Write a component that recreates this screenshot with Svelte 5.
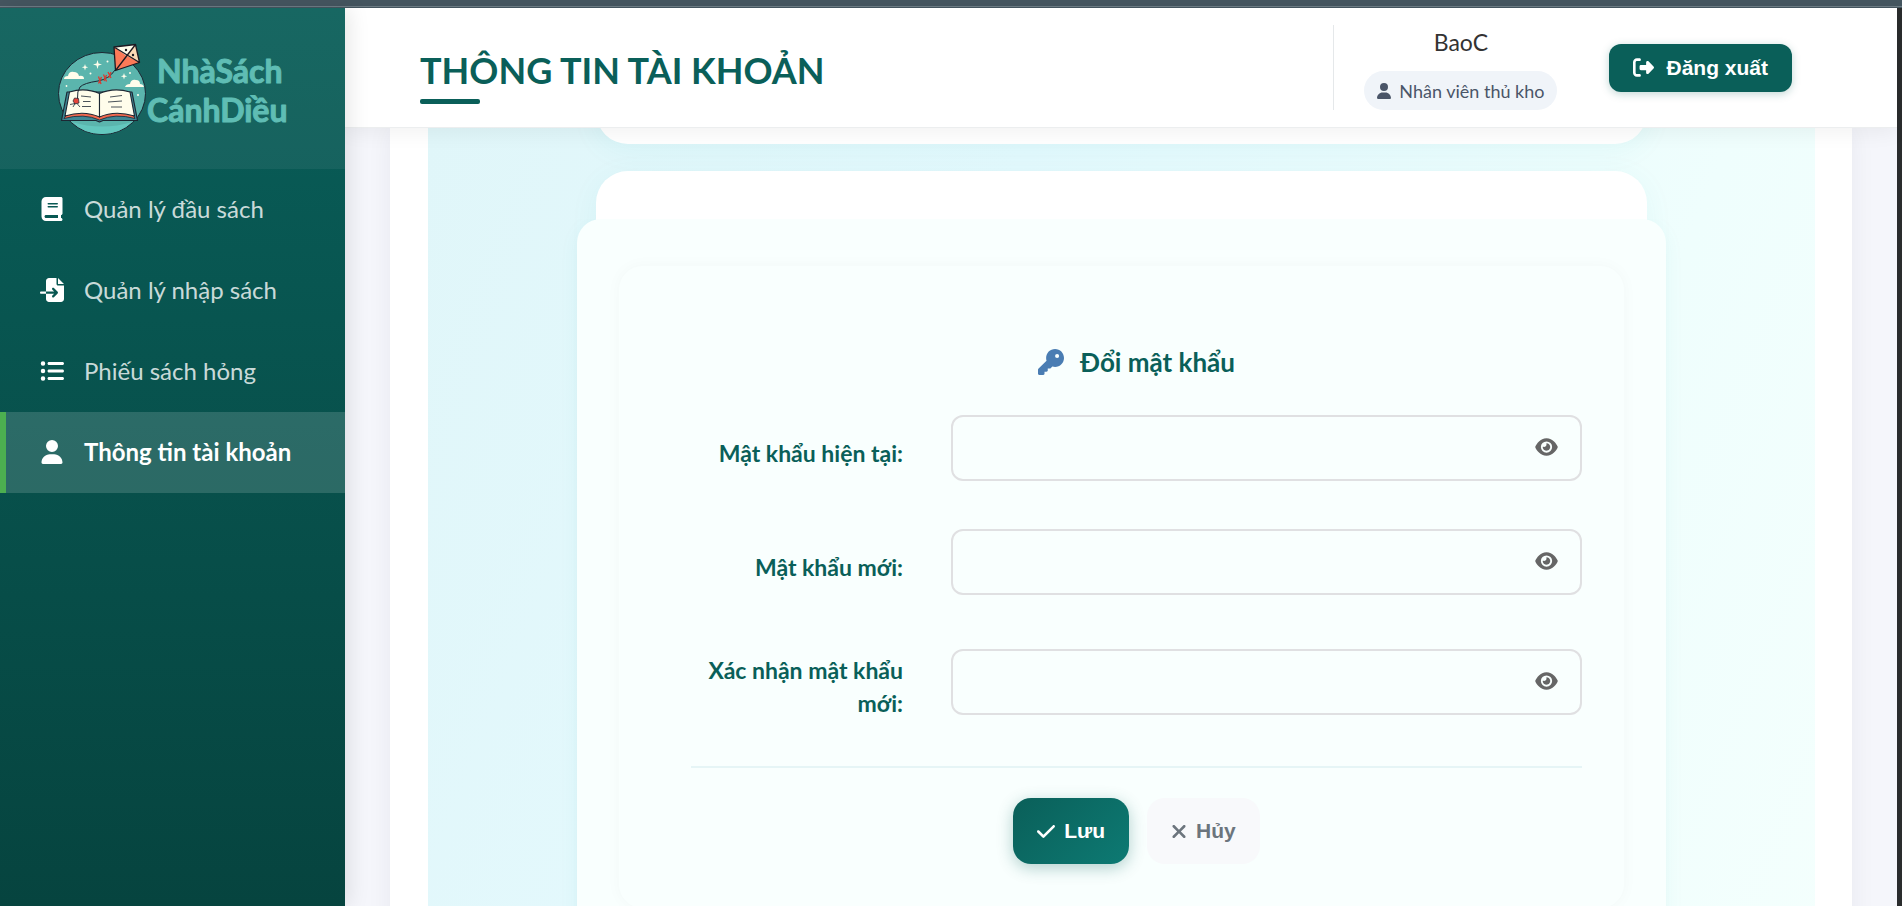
<script>
  const icons = {
    book: { box: '0 0 448 512', d: 'M96 0C43 0 0 43 0 96V416c0 53 43 96 96 96H384h32c17.7 0 32-14.3 32-32s-14.3-32-32-32V384c17.7 0 32-14.3 32-32V32c0-17.7-14.3-32-32-32H384 96zm0 384H352v64H96c-17.7 0-32-14.3-32-32s14.3-32 32-32zm32-240c0-8.8 7.2-16 16-16H336c8.8 0 16 7.2 16 16s-7.2 16-16 16H144c-8.8 0-16-7.2-16-16zm16 48H336c8.8 0 16 7.2 16 16s-7.2 16-16 16H144c-8.8 0-16-7.2-16-16s7.2-16 16-16z' },
    fileImport: { box: '0 0 512 512', d: 'M128 64c0-35.3 28.7-64 64-64H352V128c0 17.7 14.3 32 32 32H512V448c0 35.3-28.7 64-64 64H192c-35.3 0-64-28.7-64-64V336H302.1l-39 39c-9.4 9.4-9.4 24.6 0 33.9s24.6 9.4 33.9 0l80-80c9.4-9.4 9.4-24.6 0-33.9l-80-80c-9.4-9.4-24.6-9.4-33.9 0s-9.4 24.6 0 33.9l39 39H128V64zm0 224v48H24c-13.3 0-24-10.7-24-24s10.7-24 24-24H128zM512 128H384V0L512 128z' },
    list: { box: '0 0 512 512', d: 'M64 144a48 48 0 1 0 0-96 48 48 0 1 0 0 96zM192 64c-17.7 0-32 14.3-32 32s14.3 32 32 32H480c17.7 0 32-14.3 32-32s-14.3-32-32-32H192zm0 160c-17.7 0-32 14.3-32 32s14.3 32 32 32H480c17.7 0 32-14.3 32-32s-14.3-32-32-32H192zm0 160c-17.7 0-32 14.3-32 32s14.3 32 32 32H480c17.7 0 32-14.3 32-32s-14.3-32-32-32H192zM64 464a48 48 0 1 0 0-96 48 48 0 1 0 0 96zm48-208a48 48 0 1 0 -96 0 48 48 0 1 0 96 0z' },
    user: { box: '0 0 448 512', d: 'M224 256A128 128 0 1 0 224 0a128 128 0 1 0 0 256zm-45.7 48C79.8 304 0 383.8 0 482.3C0 498.7 13.3 512 29.7 512H418.3c16.4 0 29.7-13.3 29.7-29.7C448 383.8 368.2 304 269.7 304H178.3z' },
    key: { box: '0 0 512 512', d: 'M336 352c97.2 0 176-78.8 176-176S433.2 0 336 0S160 78.8 160 176c0 18.7 2.9 36.8 8.3 53.7L7 391c-4.5 4.5-7 10.6-7 17v80c0 13.3 10.7 24 24 24h80c13.3 0 24-10.7 24-24V448h40c13.3 0 24-10.7 24-24V384h40c6.4 0 12.5-2.5 17-7l33.3-33.3c16.9 5.4 35 8.3 53.7 8.3zM376 96a40 40 0 1 1 0 80 40 40 0 1 1 0-80z' },
    eye: { box: '0 0 576 512', d: 'M288 32c-80.8 0-145.5 36.8-192.6 80.6C48.6 156 17.3 208 2.5 243.7c-3.3 7.9-3.3 16.7 0 24.6C17.3 304 48.6 356 95.4 399.4C142.5 443.2 207.2 480 288 480s145.5-36.8 192.6-80.6c46.8-43.5 78.1-95.4 93-131.1c3.3-7.9 3.3-16.7 0-24.6c-14.9-35.7-46.2-87.7-93-131.1C433.5 68.8 368.8 32 288 32zM144 256a144 144 0 1 1 288 0 144 144 0 1 1 -288 0zm144-64c0 35.3-28.7 64-64 64c-7.1 0-13.9-1.2-20.3-3.3c-5.5-1.8-11.9 1.6-11.7 7.4c.3 6.9 1.3 13.8 3.2 20.7c13.7 51.2 66.4 81.6 117.6 67.9s81.6-66.4 67.9-117.6c-11.1-41.5-47.8-69.4-88.6-71.1c-5.8-.2-9.2 6.1-7.4 11.7c2.1 6.4 3.3 13.2 3.3 20.3z' },
    logout: { box: '0 0 512 512', d: 'M377.9 105.9L500.7 228.7c7.2 7.2 11.3 17.1 11.3 27.3s-4.1 20.1-11.3 27.3L377.9 406.1c-6.4 6.4-15 9.9-24 9.9c-18.7 0-33.9-15.2-33.9-33.9l0-62.1-128 0c-17.7 0-32-14.3-32-32l0-64c0-17.7 14.3-32 32-32l128 0 0-62.1c0-18.7 15.2-33.9 33.9-33.9c9 0 17.6 3.6 24 9.9zM160 96L96 96c-17.7 0-32 14.3-32 32l0 256c0 17.7 14.3 32 32 32l64 0c17.7 0 32 14.3 32 32s-14.3 32-32 32l-64 0c-53 0-96-43-96-96L0 128C0 75 43 32 96 32l64 0c17.7 0 32 14.3 32 32s-14.3 32-32 32z' },
    check: { box: '0 0 448 512', d: 'M438.6 105.4c12.5 12.5 12.5 32.8 0 45.3l-256 256c-12.5 12.5-32.8 12.5-45.3 0l-128-128c-12.5-12.5-12.5-32.8 0-45.3s32.8-12.5 45.3 0L160 338.7 393.4 105.4c12.5-12.5 32.8-12.5 45.3 0z' },
    xmark: { box: '0 0 384 512', d: 'M342.6 150.6c12.5-12.5 12.5-32.8 0-45.3s-32.8-12.5-45.3 0L192 210.7 86.6 105.4c-12.5-12.5-32.8-12.5-45.3 0s-12.5 32.8 0 45.3L146.7 256 41.4 361.4c-12.5 12.5-12.5 32.8 0 45.3s32.8 12.5 45.3 0L192 301.3 297.4 406.6c12.5 12.5 32.8 12.5 45.3 0s12.5-32.8 0-45.3L237.3 256 342.6 150.6z' }
  };

  const menu = [
    { label: 'Quản lý đầu sách', icon: 'book' },
    { label: 'Quản lý nhập sách', icon: 'fileImport' },
    { label: 'Phiếu sách hỏng', icon: 'list' },
    { label: 'Thông tin tài khoản', icon: 'user' }
  ];
  let active = $state(3);

  let fields = $state([
    { id: 'current', label: 'Mật khẩu hiện tại:', value: '', shown: false },
    { id: 'next', label: 'Mật khẩu mới:', value: '', shown: false },
    { id: 'confirm', label: 'Xác nhận mật khẩu mới:', value: '', shown: false }
  ]);

  function reset() {
    for (const f of fields) f.value = '';
  }
</script>

{#snippet icon(name, cls)}
  <svg class="icon {cls}" viewBox={icons[name].box} aria-hidden="true"><path d={icons[name].d} /></svg>
{/snippet}

<div class="window">
  <div class="strip"></div>
  <div class="app">
    <aside>
      <div class="brand">
        <svg class="logo" viewBox="58 40 230 96" role="img" aria-label="Nhà Sách Cánh Diều">
          <ellipse cx="102" cy="92.5" rx="43.5" ry="41" fill="#5bb5ad" stroke="#1c2733" stroke-width="1" />
          <path d="M72 121Q102 130 132 121Q120 133 102 133Q84 133 72 121Z" fill="#63c7be" />
          <g fill="#fffdeb">
            <path d="M64 78q0-3 4-3q1-5 6-4q4 0 5 4q5-1 5 3z" />
            <path d="M125 86q1-3 5-3q1-5 6-4q4 0 4 4q3 0 4 3z" />
            <path d="M97.500 59l1 3.500l3.500 1l-3.500 1l-1 3.500l-1-3.500l-3.500-1l3.500-1z" />
            <path d="M85 63l.8 2.400l2.400.8l-2.400.8l-.8 2.400l-.8-2.400l-2.400-.8l2.400-.8z" />
            <path d="M124 72l.8 2.400l2.400.8l-2.400.8l-.8 2.400l-.8-2.400l-2.400-.8l2.400-.8z" />
            <circle cx="107.500" cy="60.500" r="1" /><circle cx="90.500" cy="72.500" r="1" /><circle cx="130" cy="72" r="1" />
            <circle cx="66.500" cy="85" r=".9" /><circle cx="138" cy="94" r="1.100" />
          </g>
          <path d="M67 91L61.500 119.500L96 119.500L99.500 121L103 119.500L137.500 119.500L132 91Z" fill="#3f8794" stroke="#1c2733" stroke-width="1.200" stroke-linejoin="round" />
          <path d="M69 110L64 117.500Q84 112 99.500 119Q115 112 135 117.500L131 110Z" fill="#f2694f" stroke="#1c2733" stroke-width=".8" />
          <path d="M69.500 91Q85 86 99.500 92.500L99.500 116Q84 109 65 115Z" fill="#fffdeb" stroke="#1c2733" stroke-width="1.100" stroke-linejoin="round" />
          <path d="M130 91Q114 86 99.500 92.500L99.500 116Q115 109 134.500 115Z" fill="#fffdeb" stroke="#1c2733" stroke-width="1.100" stroke-linejoin="round" />
          <path d="M81 95l10 1M83 100.500h7.500M82 105.500h9M110 96l12-1.500M108 101l14-1M111 106h11" fill="none" stroke="#1c2733" stroke-width=".8" />
          <path d="M115 69Q109 78 98 80Q84 82 80 86Q77 90 77.500 98" fill="none" stroke="#1c2733" stroke-width="1" />
          <path d="M74.500 97l4 .5l.5 4.500l-4 1l-2-3z" fill="#e5443a" stroke="#1c2733" stroke-width=".7" />
          <path d="M70 103.500l5-1l-2 3.500M77 102.500l3 3.500" fill="none" stroke="#1c2733" stroke-width=".8" />
          <path d="M98.500 75.500l2.500 7.500M103.500 73.500l3 7M108 71l3 6M98.500 82.500l3-6.500M104 80l2.500-6M108.500 77l2.500-6" stroke="#d93c31" stroke-width="1.300" />
          <path d="M114 46L135.500 43.500L139.500 61.500L115.500 69.500Z" fill="#fb7a58" />
          <path d="M114 46L135.500 43.500L126 54.500Z" fill="#fffdeb" />
          <path d="M135.500 43.500L139.500 61.500L126 54.500Z" fill="#fbd9b5" />
          <path d="M114 46L135.500 43.500L139.500 61.500L115.500 69.500ZM114 46L139.500 61.500M135.500 43.500L115.500 69.500" fill="none" stroke="#1c1a22" stroke-width="1.300" stroke-linejoin="round" />
          <circle cx="126" cy="49" r="1.200" fill="#1c1a22" /><circle cx="133" cy="54" r="1.200" fill="#1c1a22" />
          <text x="157" y="82">NhàSách</text>
          <text x="147" y="121">CánhDiều</text>
        </svg>
      </div>
      <nav>
        {#each menu as item, i}
          <a href="#{item.icon}" class:active={active === i} onclick={() => (active = i)}>
            {@render icon(item.icon, 'nav-icon')}
            <span>{item.label}</span>
          </a>
        {/each}
      </nav>
    </aside>

    <div class="page">
      <header>
        <h1>THÔNG TIN TÀI KHOẢN</h1>
        <div class="account">
          <div class="who">
            <span class="name">BaoC</span>
            <span class="role">{@render icon('user', 'role-icon')}Nhân viên thủ kho</span>
          </div>
          <button class="logout" type="button">{@render icon('logout', 'out-icon')}Đăng xuất</button>
        </div>
      </header>

      <main>
        <div class="sheet">
          <div class="panel">
            <section class="card previous"></section>
            <section class="card">
              <div class="tint">
                <form onsubmit={(e) => e.preventDefault()}>
                  <h2>{@render icon('key', 'key-icon')}Đổi mật khẩu</h2>
                  <div class="fields">
                    {#each fields as f}
                      <div class="field">
                        <label for={f.id}>{f.label}</label>
                        <div class="control">
                          <input id={f.id} type={f.shown ? 'text' : 'password'} bind:value={f.value} />
                          <button type="button" class="peek" aria-label="Hiện mật khẩu" onclick={() => (f.shown = !f.shown)}>
                            {@render icon('eye', 'eye-icon')}
                          </button>
                        </div>
                      </div>
                    {/each}
                  </div>
                  <div class="actions">
                    <button class="save" type="submit">{@render icon('check', 'check-icon')}Lưu</button>
                    <button class="cancel" type="button" onclick={reset}>{@render icon('xmark', 'x-icon')}Hủy</button>
                  </div>
                </form>
              </div>
            </section>
          </div>
        </div>
      </main>
    </div>
  </div>
</div>

<style>
  :global(body) { overflow: hidden; }
  .window, .window * { box-sizing: border-box; }
  .window {
    height: 100vh;
    display: flex;
    flex-direction: column;
    font-family: Lato, "Noto Sans", sans-serif;
    color: #333;
    background: #2a2c2d;
  }
  .strip {
    flex: none;
    height: 8px;
    background: linear-gradient(#455660 6px, #6d7c85 6px, #6d7c85 7px, #455660 7px);
  }
  .app { flex: 1; min-height: 0; display: flex; padding-right: 5px; }
  .icon { flex: none; fill: currentColor; }

  aside {
    flex: none;
    width: 345px;
    background: linear-gradient(#095e59, #06443f);
    box-shadow: 4px 0 20px rgba(0, 0, 0, 0.1);
    position: relative;
    z-index: 2;
  }
  .brand {
    height: 161px;
    display: flex;
    align-items: center;
    justify-content: center;
    background: rgba(255, 255, 255, 0.06);
  }
  .logo { width: 230px; height: 96px; overflow: visible; }
  .logo text {
    font: 700 32px Lato, sans-serif;
    fill: #5fbdb4;
    stroke: #5fbdb4;
    stroke-width: 1px;
    stroke-linejoin: round;
  }
  nav a {
    height: 81px;
    display: flex;
    align-items: center;
    gap: 20px;
    padding: 0 0 2px 34px;
    border-left: 6px solid transparent;
    color: rgba(255, 255, 255, 0.8);
    font-size: 24px;
    text-decoration: none;
  }
  nav a.active {
    border-left-color: #4caf50;
    background: rgba(255, 255, 255, 0.15);
    color: #fff;
    font-weight: 700;
  }
  .nav-icon { width: 24px; height: 24px; color: #fff; }

  .page { flex: 1; min-width: 0; display: flex; flex-direction: column; background: #f5f6fb; }
  header {
    flex: none;
    height: 120px;
    display: flex;
    align-items: center;
    justify-content: space-between;
    padding: 0 105px 0 75px;
    background: #fff;
    border-bottom: 1px solid #eceeef;
    box-shadow: 0 4px 20px rgba(0, 0, 0, 0.06);
    position: relative;
    z-index: 1;
  }
  h1 {
    margin: 0;
    padding-top: 4px;
    position: relative;
    color: #0a5f59;
    font-size: 36px;
    line-height: 48px;
    font-weight: 700;
  }
  h1::after {
    content: "";
    position: absolute;
    left: 0;
    bottom: -10px;
    width: 60px;
    height: 5px;
    border-radius: 2px;
    background: #0a5f59;
  }
  .account { display: flex; align-items: center; gap: 52px; }
  .who {
    display: flex;
    flex-direction: column;
    align-items: center;
    gap: 12px;
    padding-left: 30px;
    border-left: 1px solid #e5e8ea;
  }
  .name { font-size: 23px; line-height: 34px; }
  .role {
    display: flex;
    align-items: center;
    gap: 8px;
    height: 39px;
    padding: 0 13px;
    border-radius: 20px;
    background: #f0f4f9;
    color: #4a5568;
    font-size: 18px;
  }
  .role-icon { width: 14px; height: 16px; }
  button { border: 0; cursor: pointer; font-family: "Liberation Sans", sans-serif; }
  .logout, .save, .cancel { display: flex; align-items: center; font-size: 21px; font-weight: 700; }
  .logout {
    gap: 12px;
    height: 48px;
    padding: 0 24px;
    border-radius: 12px;
    background: #0a5f59;
    color: #fff;
    box-shadow: 0 2px 8px rgba(10, 95, 89, 0.25);
  }
  .out-icon { width: 21px; height: 21px; }
  .check-icon { width: 18px; height: 21px; }
  .x-icon { width: 16px; height: 21px; }

  main { flex: 1; min-height: 0; overflow: hidden; padding: 0 45px; }
  .sheet { padding: 0 37px 0 38px; background: #fff; box-shadow: 0 0 24px rgba(20, 30, 70, 0.06); }
  .panel {
    display: flow-root;
    padding-bottom: 60px;
    background: linear-gradient(112deg, #e0f6f9 0%, #e4f9fd 35%, #effefd 75%, #f4fffd 100%);
  }
  .card {
    max-width: 1051px;
    margin: 0 auto;
    padding-top: 48px;
    border-radius: 32px;
    background: #fff;
    box-shadow: 0 6px 30px rgba(0, 170, 170, 0.06);
  }
  .previous { height: 80px; margin-top: -64px; margin-bottom: 27px; }
  .tint {
    margin: 0 -19px;
    padding: 47px 42px 42px;
    border-radius: 24px;
    background: #f9fffe;
    box-shadow: 0 6px 20px rgba(0, 170, 170, 0.06);
    clip-path: inset(0 -40px -40px);
  }
  form {
    padding: 76px 42px 44px 72px;
    border-radius: 24px;
    box-shadow: 0 0 16px rgba(0, 60, 60, 0.03);
  }
  h2 {
    display: flex;
    align-items: center;
    justify-content: center;
    gap: 16px;
    margin: 0 0 33px;
    color: #0a5f59;
    font-size: 26px;
    line-height: 40px;
    font-weight: 700;
  }
  .key-icon { width: 26px; height: 26px; color: #4a7db3; }
  .fields { display: flex; flex-direction: column; gap: 48px; padding-bottom: 46px; border-bottom: 2px solid #e6f5f6; }
  .field { display: grid; grid-template-columns: 212px 1fr; gap: 48px; align-items: center; }
  label {
    padding-top: 11px;
    color: #0a5f59;
    font-size: 23px;
    line-height: 33px;
    font-weight: 700;
    text-align: right;
  }
  .control { position: relative; display: flex; }
  input {
    width: 100%;
    height: 66px;
    padding: 0 64px 0 20px;
    border: 2px solid #e0e0e2;
    border-radius: 12px;
    background: transparent;
    font: 22px Lato, sans-serif;
  }
  .peek {
    position: absolute;
    right: 20px;
    top: 16px;
    display: flex;
    padding: 6px 4px;
    background: none;
    color: #666;
  }
  .eye-icon { width: 23px; height: 20px; }
  .actions { display: flex; justify-content: center; gap: 18px; padding-top: 30px; }
  .save, .cancel { gap: 9px; height: 66px; padding: 0 24px; border-radius: 18px; }
  .save {
    background: linear-gradient(135deg, #0a5f59, #0d7a73);
    color: #fff;
    box-shadow: 0 4px 16px rgba(10, 95, 89, 0.3);
  }
  .cancel { background: #f8f9fb; color: #6c757d; }
</style>
